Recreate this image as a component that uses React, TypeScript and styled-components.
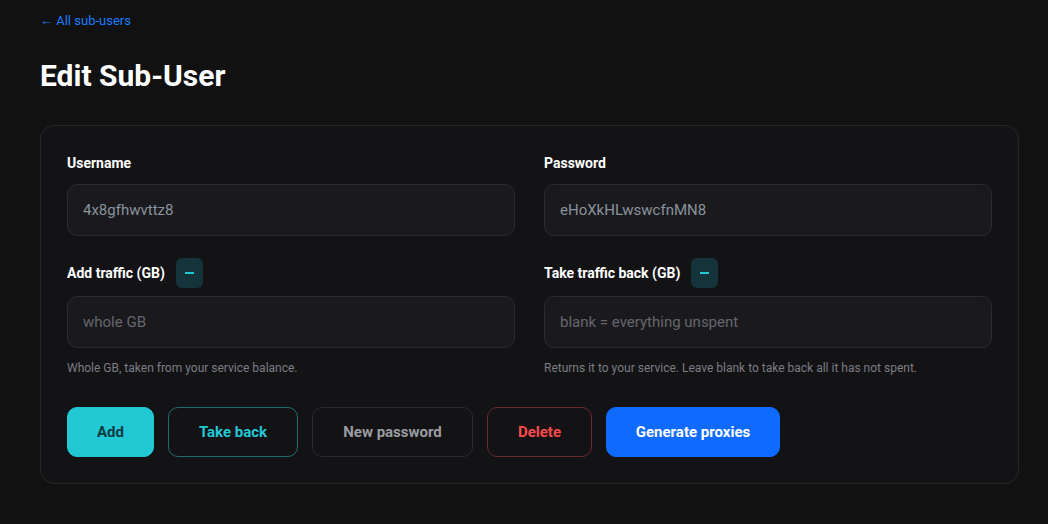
import styled, { createGlobalStyle } from "styled-components"

const GlobalStyle = createGlobalStyle`
    * { box-sizing: border-box; }
    body {
        margin: 0;
        background: #111112;
        font-family: Roboto, "Liberation Sans", Arial, sans-serif;
        color: #fff;
    }
`

const Page = styled.div`
    padding: 12px 40px 40px 40px;
    display: flex;
    flex-direction: column;
    align-items: flex-start;
`

const BackLink = styled.a`
    font-size: 13px;
    line-height: 17px;
    color: #1a7dff;
    text-decoration: none;
    cursor: pointer;
`

const Title = styled.h1`
    margin: 30px 0 0 0;
    font-size: 30px;
    line-height: 34px;
    font-weight: 700;
    color: #fff;
`

const Card = styled.div`
    margin-top: 32px;
    width: 979px;
    background: #131316;
    border: 1px solid #27272b;
    border-radius: 14px;
    padding: 29px 26px 26px 26px;
`

const Grid = styled.div`
    display: grid;
    grid-template-columns: 1fr 1fr;
    column-gap: 29px;
`

const Field = styled.div<{ $top?: number }>`
    display: flex;
    flex-direction: column;
    margin-top: ${p => p.$top ?? 0}px;
`

const LabelRow = styled.div<{ $tall?: boolean }>`
    display: flex;
    align-items: center;
    gap: 11px;
    height: ${p => (p.$tall ? 30 : 16)}px;
    margin-bottom: ${p => (p.$tall ? 8 : 13)}px;
`

const Label = styled.label`
    font-size: 14px;
    line-height: 16px;
    font-weight: 700;
    color: #fff;
`

const MinusBtn = styled.button`
    width: 27px;
    height: 30px;
    border: none;
    border-radius: 6px;
    background: #14333a;
    display: flex;
    align-items: center;
    justify-content: center;
    cursor: pointer;
    padding: 0;

    &::before {
        content: "";
        width: 9px;
        height: 2px;
        background: #22c8d4;
    }
`

const Input = styled.input`
    width: 100%;
    height: 52px;
    background: #1a1a1e;
    border: 1px solid #2a2a2f;
    border-radius: 10px;
    padding: 0 15px;
    font-family: inherit;
    font-size: 15px;
    color: #8a929c;
    outline: none;

    &::placeholder {
        color: #66666c;
    }
`

const Hint = styled.div`
    margin-top: 13px;
    font-size: 12px;
    line-height: 14px;
    color: #7c7c82;
`

const Actions = styled.div`
    display: flex;
    gap: 14px;
    margin-top: 32px;
`

type Variant = "primary" | "outline" | "ghost" | "danger" | "blue"

const variants: Record<Variant, string> = {
    primary: "background: #22c8d4; border-color: #22c8d4; color: #0e3b40;",
    outline: "background: transparent; border-color: #1f6b72; color: #22c8d4;",
    ghost: "background: transparent; border-color: #2a2a2f; color: #9a9ca2;",
    danger: "background: transparent; border-color: #6a2a2e; color: #ff4a4a;",
    blue: "background: #0f6bff; border-color: #0f6bff; color: #fff;",
}

const Button = styled.button<{ $variant: Variant; $w: number }>`
    height: 50px;
    width: ${p => p.$w}px;
    border: 1px solid;
    border-radius: 10px;
    font-family: inherit;
    font-size: 15px;
    font-weight: 700;
    cursor: pointer;
    ${p => variants[p.$variant]}
`

export default function App() {
    return (
        <>
            <GlobalStyle />
            <Page>
                <BackLink>← All sub-users</BackLink>
                <Title>Edit Sub-User</Title>
                <Card>
                    <Grid>
                        <Field>
                            <LabelRow><Label>Username</Label></LabelRow>
                            <Input defaultValue="4x8gfhwvttz8" />
                        </Field>
                        <Field>
                            <LabelRow><Label>Password</Label></LabelRow>
                            <Input defaultValue="eHoXkHLwswcfnMN8" />
                        </Field>
                        <Field $top={22}>
                            <LabelRow $tall>
                                <Label>Add traffic (GB)</Label>
                                <MinusBtn aria-label="decrease" />
                            </LabelRow>
                            <Input placeholder="whole GB" />
                            <Hint>Whole GB, taken from your service balance.</Hint>
                        </Field>
                        <Field $top={22}>
                            <LabelRow $tall>
                                <Label>Take traffic back (GB)</Label>
                                <MinusBtn aria-label="decrease" />
                            </LabelRow>
                            <Input placeholder="blank = everything unspent" />
                            <Hint>Returns it to your service. Leave blank to take back all it has not spent.</Hint>
                        </Field>
                    </Grid>
                    <Actions>
                        <Button $variant="primary" $w={87}>Add</Button>
                        <Button $variant="outline" $w={130}>Take back</Button>
                        <Button $variant="ghost" $w={161}>New password</Button>
                        <Button $variant="danger" $w={105}>Delete</Button>
                        <Button $variant="blue" $w={174}>Generate proxies</Button>
                    </Actions>
                </Card>
            </Page>
        </>
    )
}
